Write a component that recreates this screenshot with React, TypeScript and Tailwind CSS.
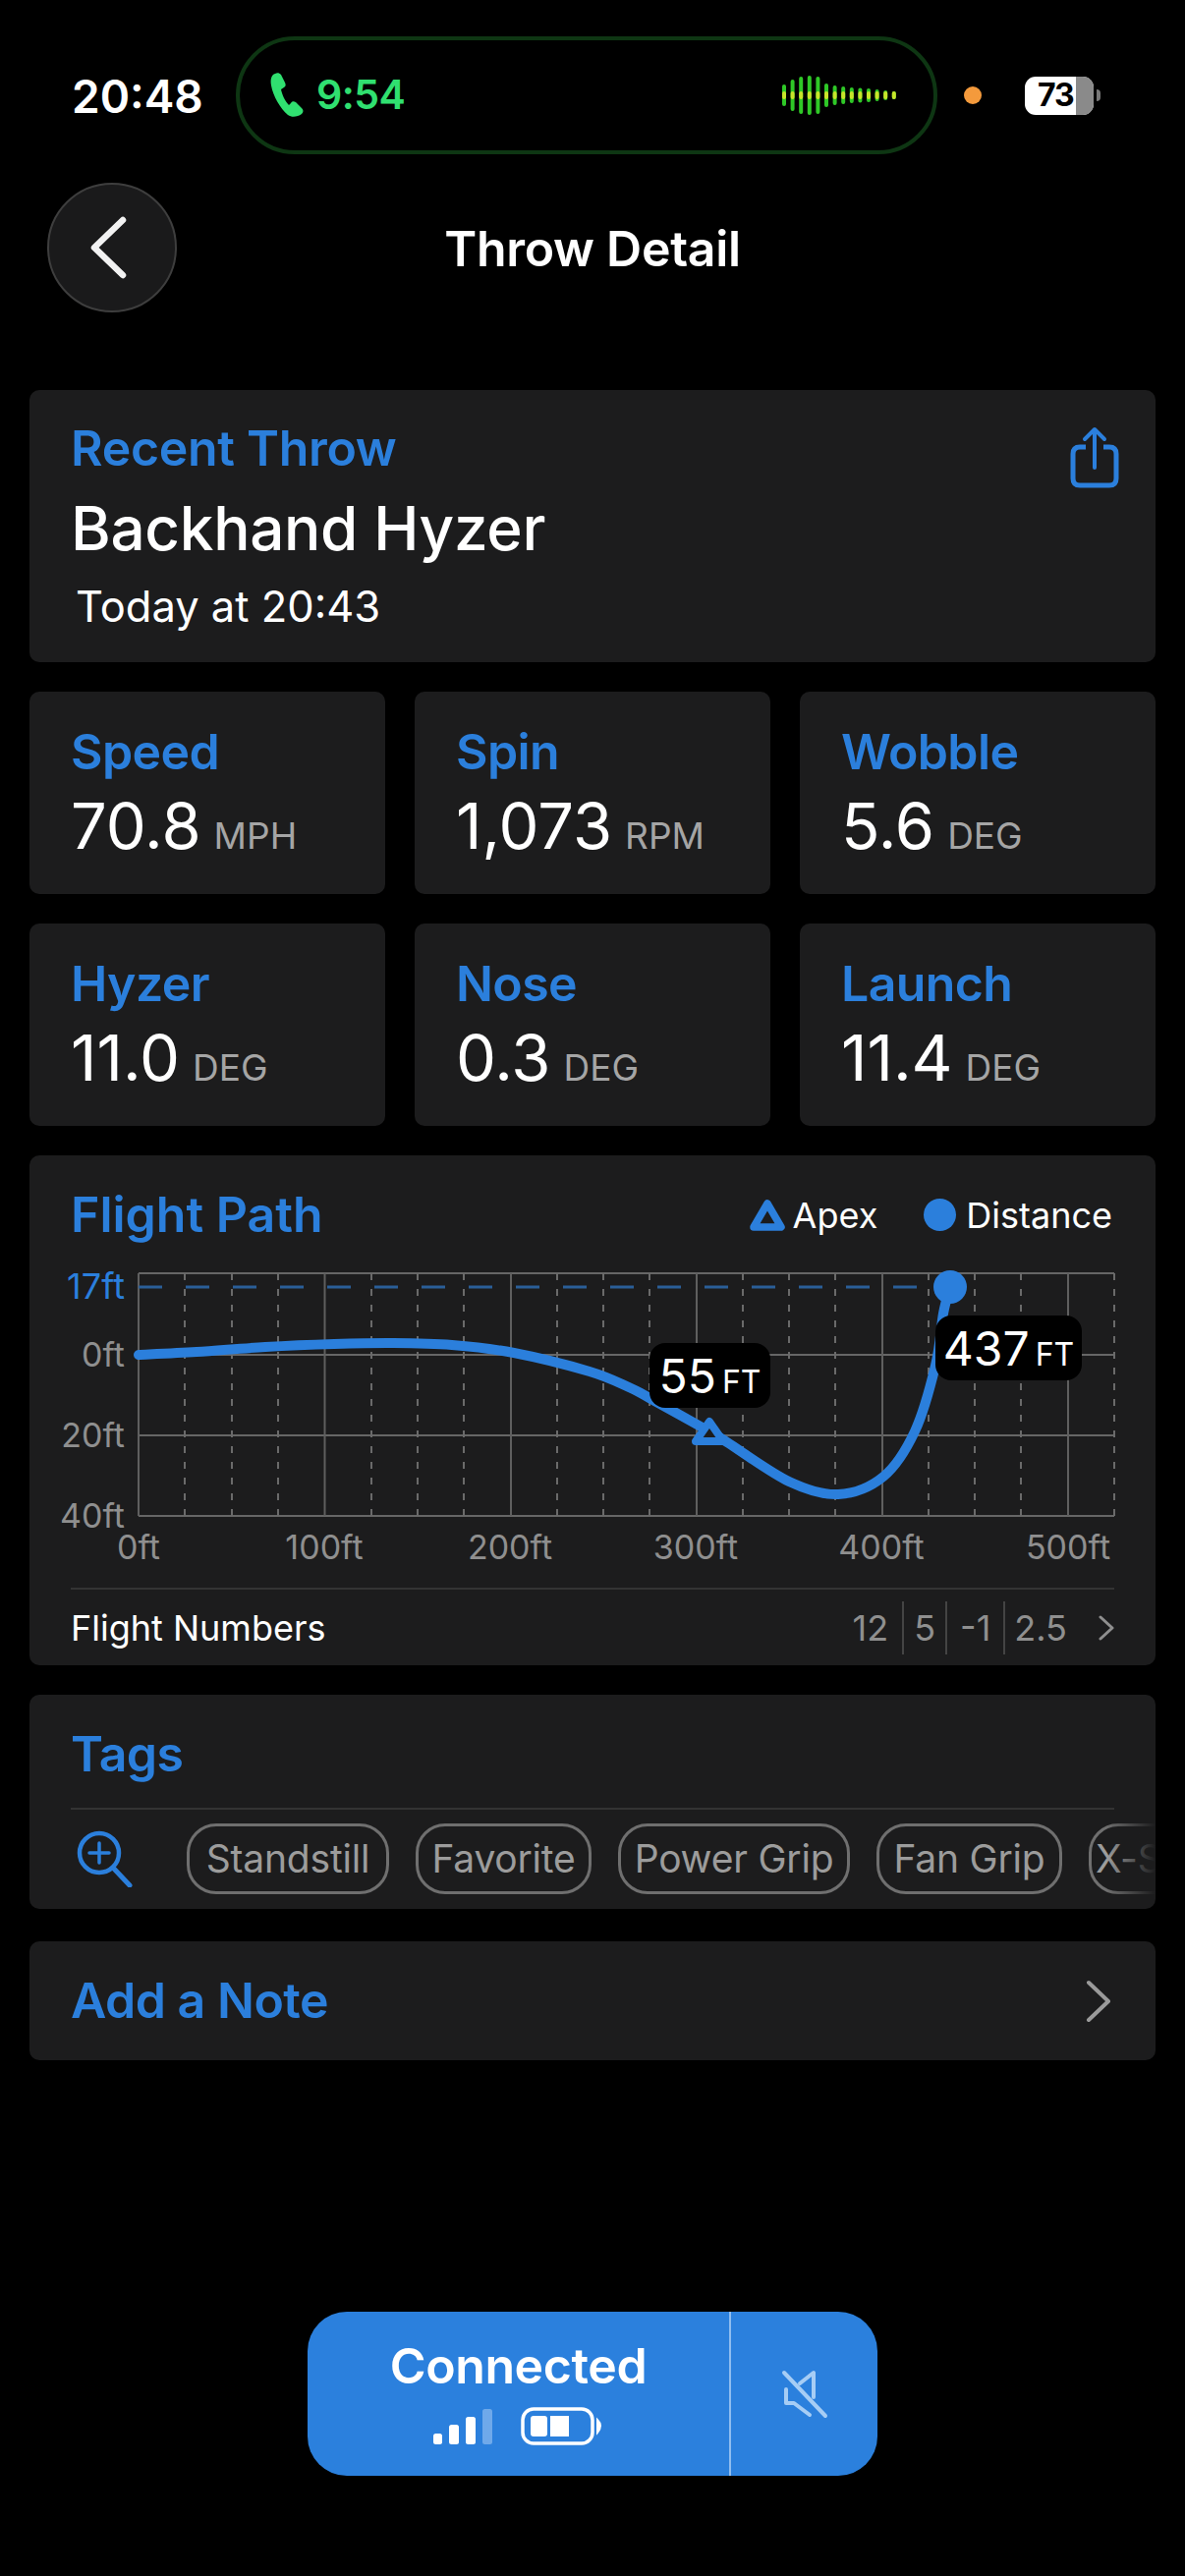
const font = { fontFamily: 'Inter, "Noto Sans", sans-serif' };

const stats = [
  [
    { label: 'Speed', value: '70.8', unit: 'MPH' },
    { label: 'Spin', value: '1,073', unit: 'RPM' },
    { label: 'Wobble', value: '5.6', unit: 'DEG' },
  ],
  [
    { label: 'Hyzer', value: '11.0', unit: 'DEG' },
    { label: 'Nose', value: '0.3', unit: 'DEG' },
    { label: 'Launch', value: '11.4', unit: 'DEG' },
  ],
];

const tags = [
  { name: 'Standstill', w: 'w-[206px]' },
  { name: 'Favorite', w: 'w-[179px]' },
  { name: 'Power Grip', w: 'w-[236px]' },
  { name: 'Fan Grip', w: 'w-[189px]' },
  { name: 'X-Step', w: 'w-[140px]' },
];

const waveHeights = [22, 32, 38, 40, 38, 24, 20, 18, 16, 15, 14, 12, 10, 8];

// points read off the flight curve, smoothed below
const curve = [
  [141, 1379], [200, 1376], [270, 1371], [340, 1368], [400, 1367], [460, 1369], [523, 1377],
  [600, 1396], [640, 1412], [661, 1423], [722, 1457], [740, 1468], [803, 1508], [853, 1521],
  [899, 1503], [931, 1457], [952, 1390], [960, 1337], [967, 1310],
];

function smoothPath(pts: number[][]) {
  let d = `M${pts[0][0]} ${pts[0][1]}`;
  for (let i = 0; i < pts.length - 1; i++) {
    const p0 = pts[Math.max(i - 1, 0)];
    const p1 = pts[i];
    const p2 = pts[i + 1];
    const p3 = pts[Math.min(i + 2, pts.length - 1)];
    const c1x = p1[0] + (p2[0] - p0[0]) / 6;
    const c1y = p1[1] + (p2[1] - p0[1]) / 6;
    const c2x = p2[0] - (p3[0] - p1[0]) / 6;
    const c2y = p2[1] - (p3[1] - p1[1]) / 6;
    d += ` C${c1x} ${c1y} ${c2x} ${c2y} ${p2[0]} ${p2[1]}`;
  }
  return d;
}

function StatCard({ label, value, unit }: { label: string; value: string; unit: string }) {
  return (
    <div className="h-[206px] rounded-[10px] bg-[#1c1c1d] pl-[42px] pt-[31px]">
      <div className="text-[50px] leading-[60px] font-semibold tracking-[-0.6px] text-[#2b7fdc]">{label}</div>
      <div className="mt-[8px] flex items-baseline gap-[13px] text-white">
        <span className="text-[65px] leading-[76px]">{value}</span>
        <span className="text-[37px] text-[#a5a5a5]">{unit}</span>
      </div>
    </div>
  );
}

function Tip({ value, className }: { value: string; className: string }) {
  return (
    <div className={`absolute flex h-[66px] items-baseline justify-center gap-[6px] rounded-[16px] bg-black pt-[6px] text-white ${className}`}>
      <span className="text-[48px] leading-[56px]">{value}</span>
      <span className="text-[32px] leading-[56px]">FT</span>
    </div>
  );
}

function FlightChart() {
  const solid = [141, 330.5, 520, 709, 898, 1087];
  const dashed = [188, 236, 283, 378, 425, 472, 567, 614, 661, 756, 803, 850, 945, 992, 1039, 1134];
  return (
    <div className="relative h-[320px]">
      <svg width="1146" height="320" viewBox="30 1280 1146 320" style={font}>
        {[1296, 1379, 1461, 1543].map((y) => (
          <line key={y} x1="141" x2="1134" y1={y} y2={y} stroke="#666" strokeWidth="2" />
        ))}
        {solid.map((x) => (
          <line key={x} x1={x} x2={x} y1="1296" y2="1543" stroke="#5f5f5f" strokeWidth="2" />
        ))}
        {dashed.map((x) => (
          <line key={x} x1={x} x2={x} y1="1296" y2="1543" stroke="#6a6a6a" strokeWidth="2" strokeDasharray="7 9" />
        ))}
        <line x1="141" x2="945" y1="1310" y2="1310" stroke="#2a5e98" strokeWidth="3" strokeDasharray="24 24" />

        <g fontSize="34" fill="#8f8f8f" textAnchor="end">
          <text x="127" y="1322" fontSize="36" fill="#2b7fdc">17ft</text>
          <text x="127" y="1391">0ft</text>
          <text x="127" y="1473">20ft</text>
          <text x="127" y="1555">40ft</text>
        </g>
        <g fontSize="34" fill="#8f8f8f" textAnchor="middle">
          <text x="141" y="1587">0ft</text>
          <text x="330" y="1587">100ft</text>
          <text x="519" y="1587">200ft</text>
          <text x="708" y="1587">300ft</text>
          <text x="897" y="1587">400ft</text>
          <text x="1087" y="1587">500ft</text>
        </g>

        <path d={smoothPath(curve)} fill="none" stroke="#2b7fdc" strokeWidth="10" strokeLinecap="round" />
        <circle cx="967" cy="1310" r="17" fill="#2b7fdc" />
        <path d="M722 1447 L736 1467 L708 1467 Z" fill="#1c1c1d" stroke="#2b7fdc" strokeWidth="8" strokeLinejoin="round" />
      </svg>
      <Tip value="55" className="left-[631px] top-[87px] w-[123px]" />
      <Tip value="437" className="left-[922px] top-[59px] w-[149px]" />
    </div>
  );
}

export default function App() {
  return (
    <div className="flex h-[2622px] w-[1206px] flex-col overflow-hidden bg-black" style={font}>
      {/* status bar */}
      <div className="flex h-[157px] items-end pl-[73px]">
        <div className="flex h-[120px] w-full items-center">
          <span className="w-[167px] pt-[2px] text-[46px] font-semibold text-white">20:48</span>
          <div className="flex h-[120px] w-[714px] items-center rounded-[60px] border-[4px] border-[#0e3613] pl-[31px]">
            <svg width="40" height="46" viewBox="0 0 40 46">
              <path
                d="M5 1 C1 2 0 7 1 13 C3 24 10 36 18 43 C22 46 28 45 32 42 C34 40 34 38 32 36 L26 30 C24 29 22 29 21 31 L19 33 C15 29 12 22 11 17 L14 15 C16 14 16 12 15 10 L11 2 C9 0 7 0 5 1 Z"
                fill="#30e070"
              />
            </svg>
            <span className="ml-[7px] w-[88px] text-[41px] font-semibold tracking-[-0.5px] text-[#30e070]">9:54</span>
            <svg className="ml-[385px]" width="118" height="42" viewBox="0 0 118 42">
              {waveHeights.map((h, i) => (
                <g key={i}>
                  <rect x={i * 8.6 + 1} y={21 - h / 2} width="4" height={h} rx="2" fill="#2fc827" />
                  <rect x={i * 8.6 + 1} y={17} width="4" height="8" rx="2" fill="#c8e52a" />
                </g>
              ))}
            </svg>
          </div>
          <span className="ml-[27px] h-[18px] w-[18px] rounded-full bg-[#f49a3c]" />
          <div className="relative ml-[44px] flex h-[39px] w-[70px] items-center overflow-hidden rounded-[11px] bg-white">
            <span className="pl-[13px] text-[32px] leading-none font-bold tracking-[-1px] text-black">73</span>
            <span className="absolute right-0 h-full w-[18px] bg-[#8a8a8a]" />
          </div>
          <span className="ml-[3px] h-[12px] w-[4px] rounded-r-full bg-[#777]" />
        </div>
      </div>

      {/* nav */}
      <div className="mt-[29px] grid h-[132px] grid-cols-[1fr_auto_1fr] items-center pl-[48px] pr-[48px]">
        <div className="flex h-[132px] w-[132px] items-center justify-center rounded-full border-2 border-[#3e3e3e] bg-[#1a1a1b]">
          <svg className="mr-[8px]" width="42" height="64" viewBox="0 0 42 64">
            <path d="M36 4 L7 32 L36 60" fill="none" stroke="#f2f2f2" strokeWidth="6.5" strokeLinecap="round" strokeLinejoin="round" />
          </svg>
        </div>
        <div className="pt-[2px] text-[50px] font-semibold tracking-[-0.3px] text-white">Throw Detail</div>
        <div />
      </div>

      {/* cards */}
      <div className="mt-[79px] flex flex-col px-[30px]">
        <div className="flex h-[277px] justify-between rounded-[10px] bg-[#1c1c1d] pl-[42px] pr-[37px] pt-[30px]">
          <div>
            <div className="text-[50px] leading-[58px] font-semibold tracking-[-0.3px] text-[#2b7fdc]">Recent Throw</div>
            <div className="mt-[15px] text-[62px] leading-[76px] font-medium tracking-[-0.3px] text-white">Backhand Hyzer</div>
            <div className="mt-[14px] pl-[5px] text-[43.5px] leading-[54px] text-white">Today at 20:43</div>
          </div>
          <svg className="mt-[7px]" width="50" height="64" viewBox="0 0 50 64">
            <path d="M16 21 H10 Q3 21 3 28 V53 Q3 60 10 60 H40 Q47 60 47 53 V28 Q47 21 40 21 H34" fill="none" stroke="#2b7fdc" strokeWidth="5" />
            <path d="M25 42 V4 M15 13 L25 3 L35 13" fill="none" stroke="#2b7fdc" strokeWidth="4" strokeLinecap="round" strokeLinejoin="round" />
          </svg>
        </div>

        {stats.map((row, i) => (
          <div key={i} className="mt-[30px] grid grid-cols-3 gap-[30px]">
            {row.map((s) => (
              <StatCard key={s.label} {...s} />
            ))}
          </div>
        ))}

        <div className="mt-[30px] h-[519px] rounded-[10px] bg-[#1c1c1d]">
          <div className="flex h-[104px] items-center justify-between pl-[42px] pr-[44px] pt-[17px]">
            <span className="text-[50px] font-semibold text-[#2b7fdc]">Flight Path</span>
            <div className="flex items-center text-[36px] text-white">
              <svg width="38" height="34" viewBox="0 0 38 34">
                <path d="M19 5 L33 29 L5 29 Z" fill="none" stroke="#2b7fdc" strokeWidth="7.5" strokeLinejoin="round" />
              </svg>
              <span className="ml-[7px]">Apex</span>
              <span className="ml-[47px] h-[33px] w-[33px] rounded-full bg-[#2b7fdc]" />
              <span className="ml-[10px]">Distance</span>
            </div>
          </div>
          <FlightChart />
          <div className="mx-[42px] mt-[16px] flex h-[79px] items-center justify-between border-t-2 border-[#333]">
            <span className="text-[36px] text-white">Flight Numbers</span>
            <div className="flex items-center text-[36px] text-[#8f8f8f]">
              <span className="border-r-2 border-[#444] pr-[14px]">12</span>
              <span className="border-r-2 border-[#444] px-[10px]">5</span>
              <span className="border-r-2 border-[#444] px-[13px]">-1</span>
              <span className="pl-[9px]">2.5</span>
              <svg className="ml-[32px]" width="16" height="26" viewBox="0 0 16 26">
                <path d="M2 2 L14 13 L2 24" fill="none" stroke="#8f8f8f" strokeWidth="3" strokeLinecap="round" strokeLinejoin="round" />
              </svg>
            </div>
          </div>
        </div>

        <div className="mt-[30px] h-[218px] overflow-hidden rounded-[10px] bg-[#1c1c1d]">
          <div className="flex h-[115px] items-center pl-[42px] pt-[5px] text-[50px] font-semibold tracking-[-0.6px] text-[#2b7fdc]">Tags</div>
          <div className="mx-[42px] border-t-2 border-[#333]" />
          <div className="relative mt-[14px] flex items-center pl-[48px]">
            <svg className="shrink-0" width="58" height="58" viewBox="0 0 58 58">
              <circle cx="23" cy="23" r="20" fill="none" stroke="#2b7fdc" strokeWidth="4.5" />
              <path d="M37 38 L54 56" fill="none" stroke="#2b7fdc" strokeWidth="5" strokeLinecap="round" />
              <path d="M23 13 V33 M13 23 H33" fill="none" stroke="#2b7fdc" strokeWidth="3.5" strokeLinecap="round" />
            </svg>
            <div className="ml-[54px] flex gap-[27px]">
              {tags.map((t) => (
                <div
                  key={t.name}
                  className={`flex h-[72px] shrink-0 items-center justify-center rounded-[30px] border-[3px] border-[#6f6f6f] text-[39px] tracking-[-0.2px] whitespace-nowrap text-[#9c9c9c] ${t.w}`}
                >
                  {t.name}
                </div>
              ))}
            </div>
            <div className="absolute right-0 top-0 h-full w-[50px] bg-gradient-to-r from-transparent to-[#1c1c1d]" />
          </div>
        </div>

        <div className="mt-[33px] flex h-[121px] items-center justify-between rounded-[10px] bg-[#1c1c1d] pl-[42px] pr-[44px]">
          <span className="text-[50px] font-semibold tracking-[-0.5px] text-[#2b7fdc]">Add a Note</span>
          <svg width="28" height="44" viewBox="0 0 28 44">
            <path d="M4 3 L24 22 L4 41" fill="none" stroke="#9a9a9a" strokeWidth="4" strokeLinecap="round" strokeLinejoin="round" />
          </svg>
        </div>
      </div>

      {/* connected pill */}
      <div className="mx-auto mt-[256px] flex h-[167px] w-[580px] overflow-hidden rounded-[40px] bg-[#2b80dd]">
        <div className="flex w-[431px] flex-col items-center border-r-2 border-[#8fbdf0] pt-[25px]">
          <div className="text-[50px] leading-[60px] font-semibold tracking-[-0.4px] text-white">Connected</div>
          <svg className="ml-[3px] mt-[12px]" width="176" height="40" viewBox="0 0 176 40">
            <rect x="0" y="27" width="9" height="11" rx="2.5" fill="#fff" />
            <rect x="16" y="18" width="10" height="20" rx="2.5" fill="#fff" />
            <rect x="33" y="10" width="10" height="28" rx="2.5" fill="#fff" />
            <rect x="50" y="2" width="10" height="36" rx="2.5" fill="#6fa9ea" />
            <rect x="91" y="2" width="71" height="35" rx="11" fill="none" stroke="#fff" strokeWidth="3.5" />
            <rect x="99" y="9" width="17" height="21" rx="3" fill="#fff" />
            <rect x="119" y="9" width="19" height="21" fill="#fff" />
            <path d="M167 13 Q173 19 167 26 Z" fill="#fff" stroke="#fff" strokeWidth="2" />
          </svg>
        </div>
        <div className="flex flex-1 items-center justify-center">
          <svg width="50" height="50" viewBox="0 0 50 50" fill="none" stroke="#a6cdf5" strokeWidth="4" strokeLinecap="round" strokeLinejoin="round">
            <path d="M4 3 L46 47" />
            <path d="M20 14 L34 3 V28" />
            <path d="M6 20 V34 H14 L30 46" />
          </svg>
        </div>
      </div>
    </div>
  );
}
